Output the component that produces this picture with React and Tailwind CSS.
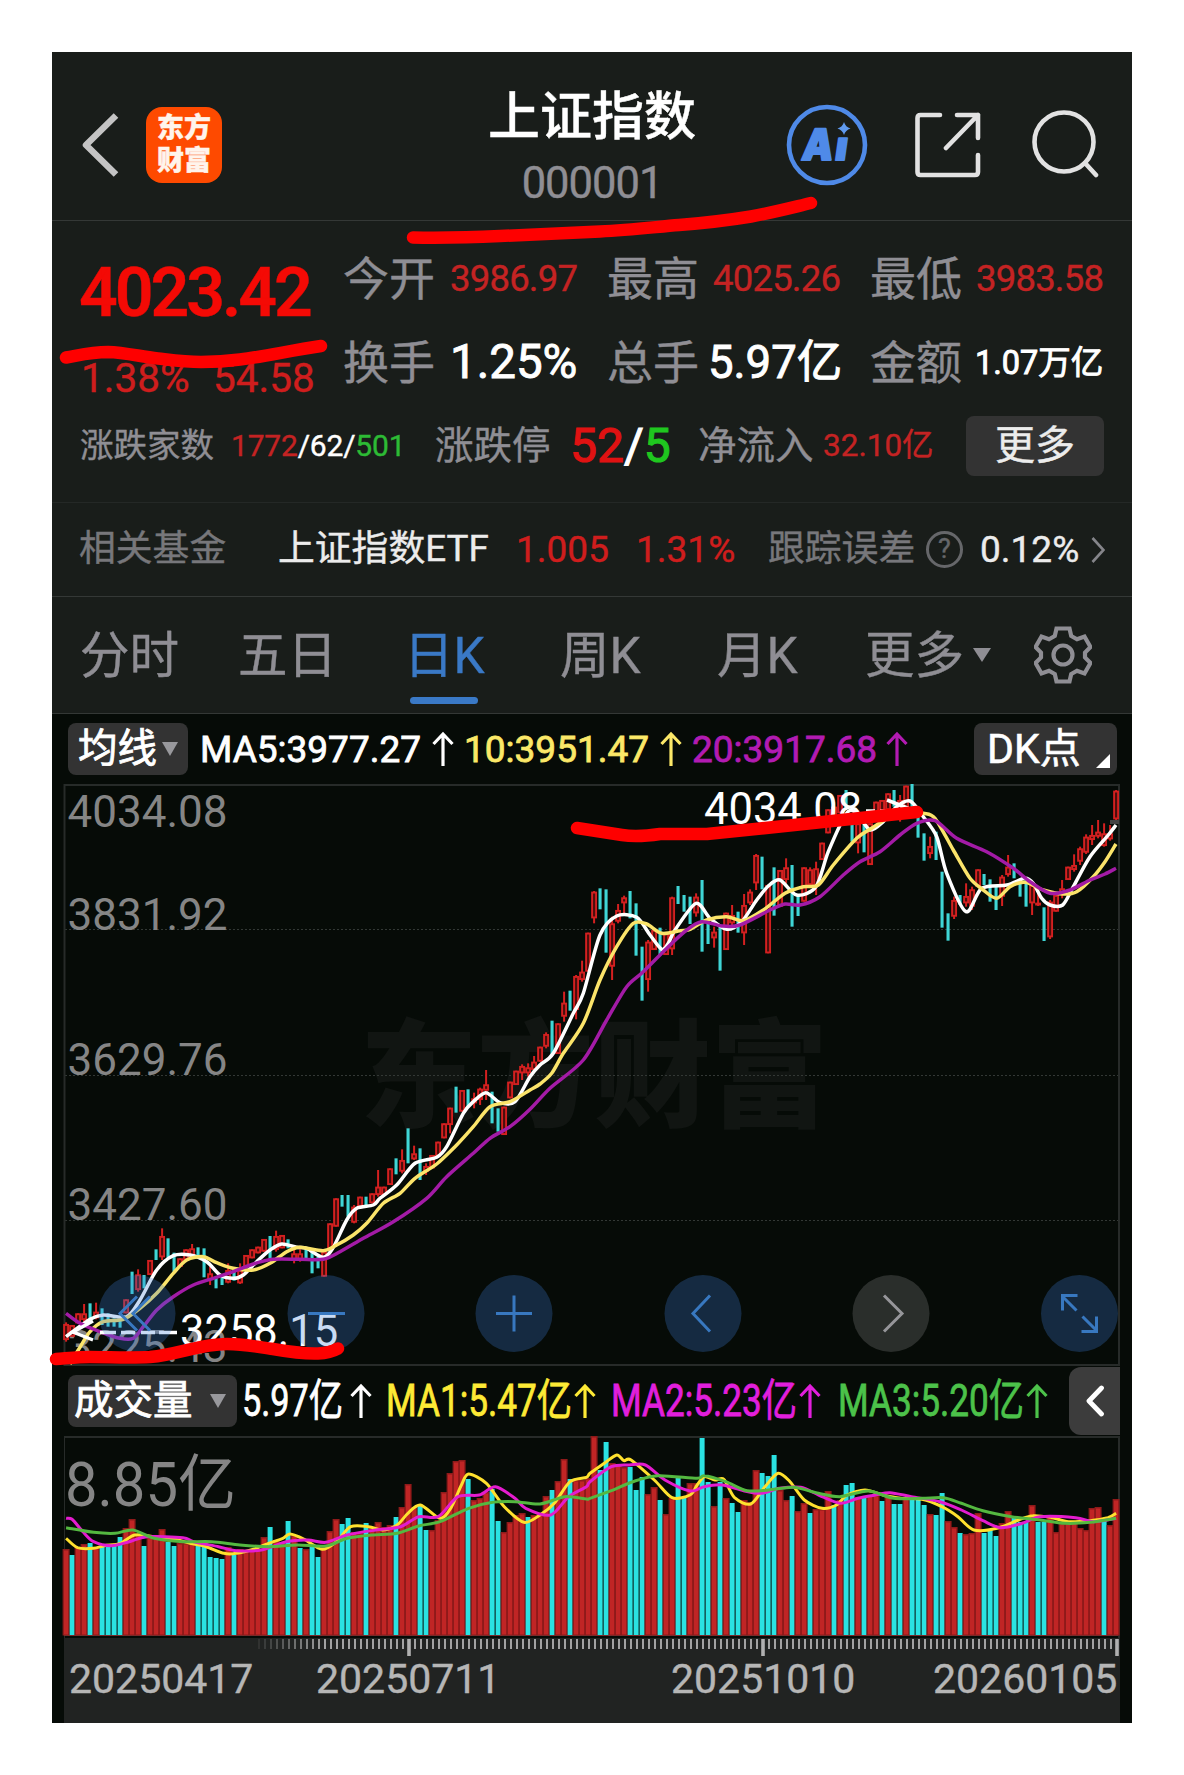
import clsx from 'clsx';

const UP = '#d42020';
const DOWN = '#3fd6d6';
const STEP = 6;
const FIRST_X = 66;

// [high, low, body top, body bottom] per day, or [high, low] when the body fills the range.
// Cyan days are listed in FALLING.
const BLOCKS = [
    {
        from: 0, y: 1160, rows: [
            [487, 545, 492, 540], [495, 530], [460, 490], [432, 490, 460, 480], [430, 475], [428, 478, 455, 475], [445, 495], [460, 500],
            [475, 500], [480, 503], [418, 460], [335, 402], [328, 395, 343, 390], [345, 385], [300, 345], [268, 300],
            [205, 300, 228, 292], [235, 295], [278, 335], [295, 320], [268, 300], [252, 290, 265, 288], [262, 290], [265, 352],
            [320, 375, 340, 360], [350, 385], [345, 375], [310, 370, 330, 368], [330, 362], [310, 372, 330, 370], [285, 320], [268, 295],
            [260, 280], [237, 275], [228, 300], [212, 275, 228, 270], [225, 265], [238, 265], [265, 310, 280, 300], [268, 305, 280, 300],
            [265, 295], [270, 340], [290, 325], [275, 350], [190, 270], [115, 200], [105, 140], [105, 170],
            [135, 190, 140, 188], [110, 140], [110, 135], [100, 130], [30, 110, 80, 105],
        ],
    },
    {
        from: 53, y: 1040, rows: [
            [440, 465], [385, 435], [355, 403], [328, 400, 360, 395], [265, 370], [317, 360, 340, 358], [325, 420], [370, 405, 378, 395],
            [345, 385], [305, 350], [250, 295], [203, 280, 203, 255], [140, 218], [150, 215], [148, 200], [158, 205, 175, 190],
            [143, 195, 146, 180], [90, 180, 133, 152], [155, 250], [205, 275], [200, 285],
        ],
    },
    {
        from: 74, y: 780, rows: [
            [905, 955], [872, 915], [853, 900, 858, 880], [850, 890, 862, 880], [828, 875, 845, 870], [800, 845], [757, 805, 762, 800], [722, 825],
            [730, 822], [635, 725, 668, 710], [632, 692], [585, 718, 588, 690], [542, 605, 575, 600], [458, 575], [333, 430, 335, 415], [325, 388],
            [328, 518], [410, 600, 430, 560], [372, 430, 390, 425], [347, 400, 352, 370], [333, 415], [370, 527], [500, 662], [480, 635, 485, 600],
            [450, 510], [443, 525],
            [460, 525], [350, 525, 352, 508], [318, 372], [345, 395], [350, 432], [340, 410, 350, 400], [300, 515], [425, 492],
            [440, 503, 455, 475], [435, 572], [398, 510], [375, 440, 405, 430], [395, 458], [342, 495, 375, 460], [328, 375, 335, 370], [222, 330, 225, 310],
            [230, 328], [315, 520], [262, 407], [270, 380], [235, 310, 262, 300], [255, 440], [345, 408], [262, 365],
            [262, 320, 268, 315], [245, 345, 265, 320], [188, 240],
        ],
    },
    {
        from: 127, y: 770, rows: [
            [118, 190], [110, 140], [75, 130], [60, 120], [140, 215], [150, 250, 160, 220], [160, 247], [160, 285],
            [95, 130], [90, 150], [70, 120], [60, 110], [75, 155, 90, 120], [47, 120], [42, 115], [125, 203],
            [190, 272], [200, 265, 228, 252], [185, 270], [305, 473], [430, 512], [380, 447, 390, 440], [375, 405], [340, 410, 378, 400],
            [350, 420, 358, 410], [298, 350], [312, 345], [328, 395], [345, 420], [315, 408, 320, 380], [255, 320, 290, 315], [280, 325],
            [335, 380], [325, 410], [340, 435, 345, 400], [365, 408, 398, 406], [412, 513], [390, 507, 395, 502], [375, 425], [330, 385, 355, 375],
            [290, 330], [253, 305, 285, 300], [230, 285, 235, 275], [193, 252, 200, 248], [165, 225, 195, 210], [150, 205, 185, 200], [160, 230, 190, 228], [165, 212, 190, 208],
            [60, 150, 62, 148],
        ],
    },
];

const FALLING = new Set([
    4, 6, 7, 8, 9, 11, 13, 15, 17, 18, 22, 23, 25, 26, 28, 34, 37, 40, 41, 42, 46, 47, 50, 55, 57, 59, 65, 67, 71, 72, 81, 84, 89, 90, 94, 95,
    96, 99, 102, 103, 104, 106, 107, 109, 112, 116, 118, 121, 122, 130, 131, 133, 138, 141, 142, 143, 145, 146, 147, 149, 153, 154, 155, 158,
    159, 160, 163,
]);

const VOLUME_TOPS = [
    1549, 1555, 1547, 1544, 1543, 1547, 1547, 1547, 1545, 1537, 1528, 1519, 1534, 1546, 1537, 1537, 1529, 1542, 1546, 1543,
    1543, 1543, 1544, 1545, 1557, 1558, 1559, 1547, 1555, 1549, 1550, 1549, 1549, 1537, 1527, 1540, 1542, 1521, 1535, 1548,
    1549, 1544, 1557, 1546, 1531, 1519, 1524, 1518, 1532, 1533, 1523, 1528, 1522, 1527, 1525, 1517, 1507, 1484, 1507, 1506,
    1530, 1530, 1520, 1492, 1473, 1461, 1460, 1479, 1500, 1498, 1492, 1489, 1521, 1532, 1522, 1515, 1513, 1517, 1515, 1513,
    1496, 1490, 1481, 1459, 1479, 1480, 1480, 1478, 1436, 1470, 1442, 1463, 1464, 1467, 1467, 1490, 1477, 1494, 1487, 1500,
    1514, 1498, 1478, 1497, 1483, 1483, 1438, 1482, 1506, 1482, 1498, 1503, 1512, 1500, 1502, 1470, 1473, 1476, 1455, 1490,
    1500, 1496, 1511, 1503, 1513, 1509, 1509, 1491, 1505, 1500, 1485, 1483, 1497, 1498, 1495, 1495, 1501, 1496, 1504, 1504,
    1498, 1499, 1499, 1505, 1514, 1515, 1493, 1521, 1527, 1533, 1534, 1533, 1513, 1533, 1529, 1536, 1523, 1511, 1517, 1522,
    1522, 1505, 1522, 1522, 1517, 1532, 1523, 1523, 1522, 1528, 1530, 1508, 1507, 1520, 1525, 1499,
];

const VOLUME_FALLING = new Set([
    1, 4, 6, 7, 8, 9, 13, 17, 18, 22, 23, 24, 25, 26, 28, 34, 37, 39, 41, 42, 46, 47, 50, 55, 59, 60, 67, 71, 72, 77, 81, 84, 89, 90, 94, 95,
    96, 99, 102, 103, 106, 107, 109, 111, 112, 116, 117, 118, 121, 124, 128, 130, 131, 133, 136, 138, 139, 141, 142, 143, 145, 146, 149, 153,
    154, 155, 158, 159, 160, 162, 163, 173,
]);

// Smooth path through points stored in tiles: [origin x, origin y, x divisor, flat list of x,y]
const curve = (tiles) => {
    const pts = tiles.flatMap(([ox, oy, k, flat]) => {
        const out = [];
        for (let i = 0; i < flat.length; i += 2) out.push([ox + flat[i] / k, oy + flat[i + 1] / 3]);
        return out;
    });
    let d = `M${pts[0][0]} ${pts[0][1]}`;
    for (let i = 0; i < pts.length - 1; i++) {
        const p0 = pts[i - 1] || pts[i];
        const p1 = pts[i];
        const p2 = pts[i + 1];
        const p3 = pts[i + 2] || p2;
        const f = 7;
        d += `C${(p1[0] + (p2[0] - p0[0]) / f).toFixed(1)} ${(p1[1] + (p2[1] - p0[1]) / f).toFixed(1)} ${(p2[0] - (p3[0] - p1[0]) / f).toFixed(1)} ${(p2[1] - (p3[1] - p1[1]) / f).toFixed(1)} ${p2[0].toFixed(1)} ${p2[1].toFixed(1)}`;
    }
    return d;
};

const MA5 = curve([
    [40, 1160, 3, [78, 530, 150, 478, 190, 465, 260, 470, 300, 420, 350, 330, 400, 287, 450, 285, 500, 305, 540, 345, 580, 355, 610, 345, 650, 305, 690, 270, 725, 252, 770, 262, 800, 265, 850, 292, 880, 262, 920, 180, 950, 145, 1000, 135]],
    [330, 1040, 3, [150, 475, 200, 435, 255, 370, 320, 352, 350, 320, 400, 220, 430, 185, 468, 158, 510, 188, 555, 185, 600, 110]],
    [440, 780, 3, [300, 855, 340, 820, 400, 700, 430, 640, 480, 465, 530, 408, 590, 412, 630, 465, 665, 508, 685, 490, 705, 450]],
    [660, 780, 3, [108, 370, 150, 415, 200, 448, 245, 425, 290, 360, 325, 318, 360, 300, 410, 345, 468, 320]],
    [780, 770, 3, [145, 245, 200, 130, 230, 130, 270, 180, 310, 155, 350, 110, 390, 93, 430, 140, 470, 200, 500, 310, 558, 425, 605, 355, 680, 345, 735, 325, 760, 340, 785, 385, 810, 405, 848, 405, 880, 350, 930, 260, 985, 195, 1008, 165]],
]);
const MA10 = curve([
    [40, 1160, 3, [90, 612, 115, 570, 150, 515, 190, 485, 250, 478, 300, 445, 350, 400, 400, 340, 440, 300, 490, 290, 530, 308, 580, 325, 640, 330, 690, 310, 740, 275, 780, 262, 850, 272, 890, 255, 940, 225, 980, 190, 1030, 130]],
    [330, 1040, 3, [210, 460, 255, 415, 320, 372, 380, 315, 430, 260, 480, 200, 540, 185, 600, 150]],
    [440, 780, 3, [300, 912, 335, 880, 370, 820, 430, 730, 480, 600, 530, 500, 580, 430, 620, 432, 665, 460, 720, 452]],
    [660, 780, 3, [90, 448, 140, 420, 200, 410, 250, 422, 310, 390, 375, 340, 430, 320, 475, 315, 520, 255, 590, 175, 635, 145]],
    [780, 770, 3, [330, 140, 380, 125, 430, 130, 465, 145, 520, 240, 570, 325, 610, 360, 650, 385, 690, 350, 735, 337, 790, 360, 850, 372, 890, 365, 940, 320, 975, 275, 1008, 222]],
]);
const MA20 = curve([
    [40, 1160, 3, [78, 460, 120, 490, 180, 515, 240, 535, 280, 535, 310, 500, 350, 450, 400, 410, 460, 375, 520, 355, 580, 335, 640, 312, 700, 298, 780, 298, 850, 298, 900, 275, 970, 235, 1060, 185]],
    [330, 1040, 3, [290, 475, 350, 410, 430, 340, 480, 295, 540, 260, 600, 208]],
    [440, 780, 3, [330, 925, 430, 840, 500, 720, 560, 620, 610, 575, 685, 500, 740, 450]],
    [660, 780, 3, [125, 425, 185, 438, 240, 435, 330, 390, 375, 372, 420, 375, 480, 350, 550, 285, 600, 245, 660, 215]],
    [780, 770, 3, [360, 195, 410, 160, 465, 152, 530, 205, 620, 245, 700, 295, 750, 335, 810, 370, 870, 360, 930, 330, 975, 312, 1008, 295]],
]);

const VMA5 = curve([
    [40, 1400, 2.8, [73, 415, 105, 443, 150, 445, 180, 437, 225, 430, 265, 405, 320, 410, 380, 418, 420, 430, 465, 440, 515, 460, 550, 460, 600, 447, 640, 430, 680, 415, 700, 402, 740, 418, 790, 448, 830, 425, 870, 380, 920, 380, 960, 390, 1000, 375, 1030, 340, 1065, 315, 1120, 355, 1150, 325, 1180, 255, 1200, 222, 1250, 250, 1300, 320, 1355, 367, 1400, 345, 1440, 310, 1484, 245, 1530, 232]],
    [590, 1250, 2.8, [0, 670, 40, 640, 75, 615, 95, 632, 115, 630, 180, 690, 230, 743, 280, 735, 300, 705, 320, 680, 350, 690, 375, 688, 405, 743, 450, 762, 490, 710, 527, 670, 560, 695, 600, 750, 650, 775, 690, 765, 720, 735, 770, 720, 820, 735, 870, 745, 930, 748, 985, 770, 1030, 800, 1075, 840, 1140, 835, 1200, 810, 1240, 797, 1290, 802, 1340, 815, 1400, 812, 1450, 803, 1473, 790]],
]);
const VMA10 = curve([
    [40, 1400, 2.8, [73, 355, 90, 358, 120, 395, 150, 425, 200, 437, 250, 425, 300, 410, 400, 413, 430, 425, 500, 440, 550, 452, 620, 450, 690, 425, 750, 420, 800, 427, 860, 405, 940, 390, 1010, 380, 1060, 350, 1115, 350, 1170, 290, 1230, 285, 1275, 260, 1330, 295, 1360, 325, 1430, 345, 1480, 290, 1530, 260]],
    [590, 1250, 2.8, [0, 695, 60, 650, 110, 645, 155, 645, 210, 690, 280, 723, 320, 710, 370, 705, 430, 722, 480, 730, 530, 715, 590, 712, 640, 735, 700, 760, 750, 745, 800, 735, 840, 728, 900, 740, 980, 755, 1040, 780, 1100, 812, 1150, 833, 1210, 820, 1260, 800, 1360, 803, 1410, 815, 1473, 805]],
]);
const VMA20 = curve([
    [40, 1400, 2.8, [73, 383, 150, 397, 210, 400, 260, 390, 320, 415, 400, 425, 480, 425, 560, 435, 640, 440, 720, 435, 800, 438, 860, 415, 930, 405, 1000, 400, 1060, 378, 1120, 365, 1200, 325, 1260, 308, 1330, 305, 1400, 312, 1470, 290, 1530, 297]],
    [590, 1250, 2.8, [0, 745, 60, 722, 120, 695, 190, 677, 300, 685, 320, 677, 380, 695, 440, 722, 500, 720, 570, 712, 640, 730, 700, 740, 780, 723, 850, 745, 930, 745, 990, 743, 1040, 760, 1100, 782, 1180, 800, 1260, 810, 1330, 820, 1400, 817, 1473, 805]],
]);

const Candles = () =>
    BLOCKS.flatMap(({ from, y, rows }) =>
        rows.map(([hi, lo, top = hi, bottom = lo], n) => {
            const i = from + n;
            const x = FIRST_X + i * STEP;
            const py = (v) => y + v / 3;
            if (FALLING.has(i)) {
                return <rect key={i} x={x - 1.5} y={py(hi)} width="3.1" height={py(lo) - py(hi)} fill={DOWN} />;
            }
            return (
                <g key={i}>
                    <rect x={x - 0.9} y={py(hi)} width="2" height={py(lo) - py(hi)} fill={UP} />
                    <rect x={x - 1.9} y={py(top) + 0.9} width="4" height={Math.max(py(bottom) - py(top) - 1.8, 1)} fill="#4a0e0c" stroke={UP} strokeWidth="1.9" />
                </g>
            );
        })
    );

const ArrowUp = ({ className }) => (
    <svg viewBox="0 0 22 36" fill="none" stroke="currentColor" strokeWidth="3.2" className={clsx('h-9 w-[22px] shrink-0', className)}>
        <path d="M11 35V3M1.5 13 11 3l9.5 10" />
    </svg>
);

const Slot = ({ className, children }) => <span className={clsx('shrink-0 whitespace-nowrap leading-none', className)}>{children}</span>;

const Header = () => (
    <header className="flex h-[169px] border-b border-[#343836] pl-[29px]">
        <svg viewBox="0 0 38 64" fill="none" stroke="#c4c4c4" strokeWidth="6.500" strokeLinejoin="round" className="mt-[61px] h-16 w-[38px]">
            <path d="M35 2.500 5 32l30 29.500" />
        </svg>
        <div className="ml-[27px] mt-[55px] flex h-[76px] w-[76px] shrink-0 flex-col items-center justify-center rounded-2xl bg-[#fe4a00] text-[27px] font-black leading-[33px] text-[#fff4ec]">
            <span>东方</span>
            <span>财富</span>
        </div>
        <div className="ml-[262px] mt-10 flex w-[216px] shrink-0 flex-col items-center">
            <Slot className="text-[52px] font-medium leading-[56px] text-white">上证指数</Slot>
            <Slot className="mt-[18px] text-[43.500px] leading-[46px] tracking-[-1px] text-[#8f8e94]">000001</Slot>
        </div>
        <svg viewBox="0 0 82 82" className="ml-[86px] mt-[52px] h-[82px] w-[82px] shrink-0">
            <circle cx="41" cy="41" r="38" fill="none" stroke="#4f8ae8" strokeWidth="4.6" />
            <g transform="translate(9.500 0) skewX(-8)" fill="#4f8ae8" stroke="#4f8ae8" strokeWidth="2" strokeLinejoin="round" fontSize="43" className="font-['Inter'] font-black">
                <text x="13" y="56" textLength="31" lengthAdjust="spacingAndGlyphs">A</text>
                <text x="46.500" y="56" fontSize="40" textLength="12" lengthAdjust="spacingAndGlyphs">ı</text>
            </g>
            <path d="M58 18q1.500 5 6.500 6.500-5 1.500-6.500 6.500-1.500-5-6.500-6.500 5-1.500 6.500-6.500z" fill="#5f9af0" />
        </svg>
        <svg viewBox="0 0 66 66" fill="none" stroke="#e2e2e2" strokeWidth="4.600" strokeLinecap="round" strokeLinejoin="round" className="ml-[47px] mt-[60px] h-[66px] w-[66px] shrink-0">
            <path d="M25 3H5.500Q2.500 3 2.500 6v54q0 3 3 3h54.500q3 0 3-3V43M42 3h21v23M63 3 31 36" />
        </svg>
        <svg viewBox="0 0 68 70" fill="none" stroke="#e2e2e2" strokeWidth="4.600" strokeLinecap="round" className="ml-[50px] mt-[57px] h-[70px] w-[68px] shrink-0">
            <circle cx="33" cy="33" r="29.500" />
            <path d="m54 54 11 12" />
        </svg>
    </header>
);

const label = 'w-[105px] text-[46px] text-[#8f8e94]';

const Quote = () => (
    <section className="flex h-[282px] flex-col border-b border-[#242826] pt-[15px]">
        <div className="flex">
            <div className="w-[291px] pl-[27px] text-[#cf1d1d]">
                <div className="flex h-[112px] items-center pt-0.5 text-[#f40a05]">
                    <Slot className="text-[68px] font-semibold tracking-[-3.1px]">4023.42</Slot>
                </div>
                <div className="flex h-14 items-center pl-0.5 pt-1 text-[40.500px]">
                    <Slot className="w-[132px]">1.38%</Slot>
                    <Slot>54.58</Slot>
                </div>
            </div>
            <div>
                <div className="flex h-[84px] items-center pt-0.5">
                    <Slot className={label}>今开</Slot>
                    <Slot className="w-[159px] pl-0.5 text-[36.500px] tracking-[-0.8px] text-[#c42323]">3986.97</Slot>
                    <Slot className={label}>最高</Slot>
                    <Slot className="w-[158px] pl-px text-[36.500px] tracking-[-0.8px] text-[#c42323]">4025.26</Slot>
                    <Slot className={label}>最低</Slot>
                    <Slot className="pl-px text-[36.500px] tracking-[-0.8px] text-[#c42323]">3983.58</Slot>
                </div>
                <div className="flex h-[84px] items-center pt-0.5 text-white [-webkit-text-stroke:0.9px]">
                    <Slot className={clsx(label, '[-webkit-text-stroke:0.4px]')}>换手</Slot>
                    <Slot className="w-[159px] pl-0.5 text-[47.500px]">1.25%</Slot>
                    <Slot className={clsx(label, '[-webkit-text-stroke:0.4px]')}>总手</Slot>
                    <Slot className="-ml-1 w-[162px] text-[45.500px]">5.97亿</Slot>
                    <Slot className={clsx(label, '[-webkit-text-stroke:0.4px]')}>金额</Slot>
                    <Slot className="text-[32.500px]">1.07万亿</Slot>
                </div>
            </div>
        </div>
        <div className="flex h-[84px] items-center pl-[28px]">
            <Slot className="w-[151px] text-[33.500px] text-[#8f8e94]">涨跌家数</Slot>
            <Slot className="w-[204px] text-[30px] tracking-[-0.2px] text-white">
                <span className="text-[#c42323]">1772</span>/62/<span className="text-[#2dbb35]">501</span>
            </Slot>
            <Slot className="w-[134px] text-[38.500px] text-[#8f8e94]">涨跌停</Slot>
            <Slot className="w-[129px] pl-px text-[48px] text-white [-webkit-text-stroke:1.1px]">
                <span className="text-[#e01212]">52</span>/<span className="text-[#1fc71f]">5</span>
            </Slot>
            <Slot className="w-[125px] text-[38.500px] text-[#8f8e94]">净流入</Slot>
            <Slot className="w-[143px] text-[31.500px] text-[#c42323]">32.10亿</Slot>
            <button className="flex h-[60px] w-[138px] items-center justify-center rounded-lg bg-[#333333] text-[40px] leading-none text-[#ececec]">更多</button>
        </div>
    </section>
);

const FundRow = () => (
    <section className="flex h-[94px] items-center border-b border-[#343836] pl-[27px] text-[37px]">
        <Slot className="w-[199px] text-[36.800px] text-[#77777b]">相关基金</Slot>
        <Slot className="w-[236px] text-[36.800px] text-[#ececec]">上证指数ETF</Slot>
        <Slot className="w-[120px] pl-0.5 text-[#cf1d1d]">1.005</Slot>
        <Slot className="w-[134px] pl-0.5 text-[#cf1d1d]">1.31%</Slot>
        <Slot className="w-[158px] text-[36.800px] text-[#77777b]">跟踪误差</Slot>
        <span className="flex h-[37px] w-[37px] shrink-0 items-center justify-center rounded-full border-[3px] border-[#66676a] text-[27px] leading-none text-[#66676a]">?</span>
        <Slot className="ml-[17px] w-[111px] text-[#ececec]">0.12%</Slot>
        <svg viewBox="0 0 14 26" fill="none" stroke="#85858a" strokeWidth="2.600" className="h-[26px] w-[14px]">
            <path d="m1.500 1 11 12-11 12" />
        </svg>
    </section>
);

const TABS = [
    { name: '分时', width: 'w-[158px]' },
    { name: '五日', width: 'w-[166px]' },
    { name: '日K', width: 'w-[156px]', active: true },
    { name: '周K', width: 'w-[157px]' },
    { name: '月K', width: 'w-[148px]' },
    { name: '更多', width: 'w-[108px]' },
];

const Tabs = () => (
    <nav className="flex h-[117px] items-center border-b border-[#343836] pl-7">
        {TABS.map((tab) => (
            <div key={tab.name} className={clsx('relative flex h-full shrink-0 items-center pt-1', tab.width)}>
                <Slot className={clsx('text-[49.500px]', tab.active ? 'text-[#3a79c6]' : 'text-[#8f8e94]')}>{tab.name}</Slot>
                {tab.active && <span className="absolute bottom-[9px] left-1.5 h-[7px] w-[68px] rounded-full bg-[#3a79c6]" />}
            </div>
        ))}
        <svg viewBox="0 0 18 14" className="h-3.5 w-[18px]"><path d="M0 0h18L9 14z" fill="#8f8e94" /></svg>
        <svg viewBox="-29 -29 58 58" fill="none" stroke="#8f8e94" strokeWidth="4.200" className="ml-[43px] h-[58px] w-[58px]">
            <path d="M-6.500-26.500h13l1.700 7.500 5.800 3.300 7.500-2.800 6 10.500-5.500 5.500v5l5.500 5.500-6 10.500-7.500-2.800-5.800 3.300-1.700 7.500h-13l-1.700-7.500-5.800-3.300-7.500 2.800-6-10.500 5.500-5.500v-5l-5.500-5.500 6-10.500 7.500 2.800 5.800-3.300z" />
            <circle r="9.500" />
        </svg>
    </nav>
);

const MaRow = () => (
    <div className="flex h-[70px] items-center pl-4 text-[37px] [-webkit-text-stroke:0.8px]">
        <div className="flex h-[52px] w-[120px] shrink-0 items-center rounded-lg bg-[#333333] pl-[10px] text-white">
            <Slot className="w-[84px] text-[39.500px]">均线</Slot>
            <svg viewBox="0 0 16 14" className="h-3.5 w-4"><path d="M0 0h16L8 14z" fill="#98989c" /></svg>
        </div>
        <Slot className="ml-[11px] w-[233px] pl-px text-white">MA5:3977.27</Slot>
        <ArrowUp className="text-white" />
        <Slot className="ml-2 w-[198px] pl-0.5 text-[#fbe868]">10:3951.47</Slot>
        <ArrowUp className="text-[#fbe868]" />
        <Slot className="ml-2 w-[196px] pl-0.5 text-[#b21bb2]">20:3917.68</Slot>
        <ArrowUp className="text-[#b21bb2]" />
        <div className="ml-[66px] flex h-[52px] w-[143px] shrink-0 items-center rounded-lg bg-[#333333] pl-[12px] text-white [-webkit-text-stroke:0.6px]">
            <Slot className="w-[110px] pl-px text-[41px]">DK点</Slot>
            <svg viewBox="0 0 14 14" className="mt-6 h-3.5 w-3.5"><path d="M14 0v14H0z" fill="#fff" /></svg>
        </div>
    </div>
);

const LABELS = [['4034.08', 826.5], ['3831.92', 929.5], ['3629.76', 1075], ['3427.60', 1220], ['3225.43', 1361.5]];

const TOOLS = [
    { x: 137, d: 'M0-17-17 0 0 17M13-17-4 0l17 17' },
    { x: 326, d: 'M-18 0h37' },
    { x: 514, d: 'M-18 0h36M0-18v36' },
    { x: 703, d: 'M7-18-10 0 7 18' },
    { x: 891, d: 'M-7-18 11 0-7 18', disabled: true },
    { x: 1079.5, d: 'M-17-3v-15h15M-17-17-3-3M17 3v15H2M17 17 3 3' },
];

const PriceChart = () => (
    <svg viewBox="52 784 1080 582" className="block h-[582px] w-[1080px] font-['Roboto']">
        <text x="360" y="1118" fontSize="117" fontWeight="900" fill="#111512" textLength="468" className="font-['Noto_Sans_CJK_SC']">东方财富</text>
        <g stroke="#333835" strokeDasharray="2 2">
            <path d="M65 929.500H1119M65 1075.500H1119M65 1220.500H1119" />
        </g>
        <path d="M64.500 785H1119V1365H64.500z" fill="none" stroke="#272b29" strokeWidth="2" />
        {LABELS.map(([text, y]) => (
            <text key={text} x="67.500" y={y} fontSize="44" fill="#858585">{text}</text>
        ))}
        <Candles />
        <rect x="1110" y="820" width="9" height="4" fill="#444" />
        <g fill="none" strokeWidth="3.500" strokeLinejoin="round">
            <path d={MA5} stroke="#fff" />
            <path d={MA10} stroke="#fbe46a" />
            <path d={MA20} stroke="#a31ba6" />
        </g>
        <g fill="#fff" fontSize="43.500" className="[-webkit-text-stroke:0.7px]">
            <text x="704" y="824">4034.08</text>
            <text x="180" y="1345.500">3258.15</text>
        </g>
        <g fill="none" stroke="#fff" strokeWidth="3.500">
            <path d="M866 811h9M887 800l18 7-18 9M880 811h22" />
            <path d="m93 1321-20 11 20 8M100 1332.500h16M121 1332.500h14M141 1332.500h14M159 1332.500h18" />
        </g>
        {TOOLS.map(({ x, d, disabled }) => (
            <g key={x} transform={`translate(${x} 1313.500)`} fill="none" strokeWidth="3" stroke={disabled ? '#96969a' : '#3878c0'}>
                <circle r="38.500" stroke="none" fill={disabled ? '#999' : '#3c7fd7'} fillOpacity={disabled ? 0.25 : 0.28} />
                <path d={d} />
            </g>
        ))}
    </svg>
);

const VOLUME_LEGEND = [
    { text: '5.97亿', box: 'w-[108px]', scale: 'scale-x-[0.77]', color: 'text-white', gap: 'ml-[5px]' },
    { text: 'MA1:5.47亿', box: 'w-[188px]', scale: 'scale-x-[0.79]', color: 'text-[#fdea35]', gap: 'ml-[14px]' },
    { text: 'MA2:5.23亿', box: 'w-[188px]', scale: 'scale-x-[0.79]', color: 'text-[#e11fdc]', gap: 'ml-[15px]' },
    { text: 'MA3:5.20亿', box: 'w-[188px]', scale: 'scale-x-[0.79]', color: 'text-[#4cc24a]', gap: 'ml-[17px]' },
];

const VolumeRow = () => (
    <div className="flex h-[70px] items-center pl-4">
        <div className="flex h-[52px] w-[169px] shrink-0 items-center rounded-lg bg-[#333333] pl-1.5 text-white [-webkit-text-stroke:0.8px]">
            <Slot className="w-[136px] text-[39.500px]">成交量</Slot>
            <svg viewBox="0 0 16 14" className="h-3.5 w-4"><path d="M0 0h16L8 14z" fill="#98989c" /></svg>
        </div>
        {VOLUME_LEGEND.map((item) => (
            <div key={item.text} className={clsx('flex shrink-0 items-center [-webkit-text-stroke:0.8px]', item.color, item.gap)}>
                <Slot className={item.box}>
                    <span className={clsx('inline-block origin-left text-[44.500px]', item.scale)}>{item.text}</span>
                </Slot>
                <ArrowUp className="h-[38px]" />
            </div>
        ))}
        <div className="ml-auto mr-3 flex h-[68px] w-[51px] shrink-0 items-center justify-center rounded-l-xl bg-[#3c3c3c]">
            <svg viewBox="0 0 20 32" fill="none" stroke="#fff" strokeWidth="4.800" strokeLinecap="round" strokeLinejoin="round" className="h-8 w-5">
                <path d="M16.500 3 4 16l12.500 13" />
            </svg>
        </div>
    </div>
);

const VolumeChart = () => (
    <svg viewBox="52 1436 1080 202" className="block h-[202px] w-[1080px] font-['Roboto']">
        <path d="M64.500 1437H1119V1638" fill="none" stroke="#272b29" strokeWidth="2" />
        <path d="M64.500 1436V1638" stroke="#272b29" />
        {VOLUME_TOPS.map((top, i) => {
            const x = FIRST_X + i * STEP;
            return VOLUME_FALLING.has(i) ? (
                <rect key={i} x={x - 2.4} y={top} width="5" height={1635.5 - top} fill="#2ae2e2" />
            ) : (
                <g key={i}>
                    <rect x={x - 3.4} y={top} width="7" height={1635.5 - top} fill="#8e1a1a" />
                    <rect x={x - 2} y={top + 1.5} width="4.200" height={1633 - top} fill="#c02525" />
                </g>
            );
        })}
        <path d="M64 1635.500H1118" stroke="#7a2a2a" />
        <g fill="none" strokeWidth="3" strokeLinejoin="round">
            <path d={VMA5} stroke="#ffe12e" />
            <path d={VMA10} stroke="#e41ccf" />
            <path d={VMA20} stroke="#54b840" />
        </g>
        <text x="65" y="1506" fontSize="62" fill="#858585" textLength="171" lengthAdjust="spacingAndGlyphs" className="font-['Roboto','Noto_Sans_CJK_SC',sans-serif]">8.85亿</text>
    </svg>
);

const TimeAxis = () => (
    <div className="ml-3 h-[86px] w-[1056px] bg-[#212322]">
        <svg viewBox="64 1638 1056 18" className="block h-[18px] w-[1056px]">
            {Array.from({ length: 144 }, (_, n) => {
                const x = 259 + n * STEP;
                return <rect key={n} x={x - 1} y="1639" width="2" height="10" fill="#a2a2a2" opacity={Math.min(1, 0.12 + n * 0.08)} />;
            })}
            {[409, 763, 1117].map((x) => (
                <rect key={x} x={x - 1.8} y="1639" width="3.600" height="17" fill="#b0b0b0" />
            ))}
        </svg>
        <div className="flex pl-[5px] pt-[3px] text-[41px] text-[#b6b6b6]">
            <Slot className="w-[247px]">20250417</Slot>
            <Slot className="w-[355px]">20250711</Slot>
            <Slot className="w-[262px]">20251010</Slot>
            <Slot>20260105</Slot>
        </div>
    </div>
);

// Freehand red underlines drawn on top of everything
const Marks = () => (
    <svg viewBox="0 0 1184 1775" fill="none" stroke="#fe0000" strokeWidth="12.500" strokeLinecap="round" strokeLinejoin="round" className="pointer-events-none absolute inset-0 h-[1775px] w-[1184px]">
        <path d="M413 237.500C440 238 469 237.500 500 236L600 231.500C630 230 655 227 679 225C710 222.500 730 220 751 216.500C775 212 790 208 811 203" />
        <path d="M66 357.500C85 354 92 352 108 352C125 352.500 140 356.500 158 358.500C175 360.500 185 362 201 362C217 362 225 361.500 240 359.500C265 356.500 290 350.500 321 346" />
        <path d="M577 828 622 835Q637 837.500 660 834H707C760 829 860 818 917 812" />
        <path d="M56 1359C70 1358 80 1357 90 1357C110 1357 130 1358 150 1357C180 1354 200 1344 227 1344C245 1344 258 1347 273 1349C290 1352 305 1354 318 1353.500Q330 1353 338 1348.500" />
    </svg>
);

const App = () => (
    <div className="relative h-[1775px] w-[1184px] overflow-hidden bg-white p-[52px] font-['Roboto','Noto_Sans_CJK_SC',sans-serif] [-webkit-text-stroke:0.4px]">
        <main className="h-[1671px] w-[1080px] overflow-hidden bg-[#191d1a]">
            <Header />
            <Quote />
            <FundRow />
            <Tabs />
            <div className="h-[1009px] bg-[#060b07]">
                <MaRow />
                <PriceChart />
                <VolumeRow />
                <VolumeChart />
                <TimeAxis />
            </div>
        </main>
        <Marks />
    </div>
);

export default App;
